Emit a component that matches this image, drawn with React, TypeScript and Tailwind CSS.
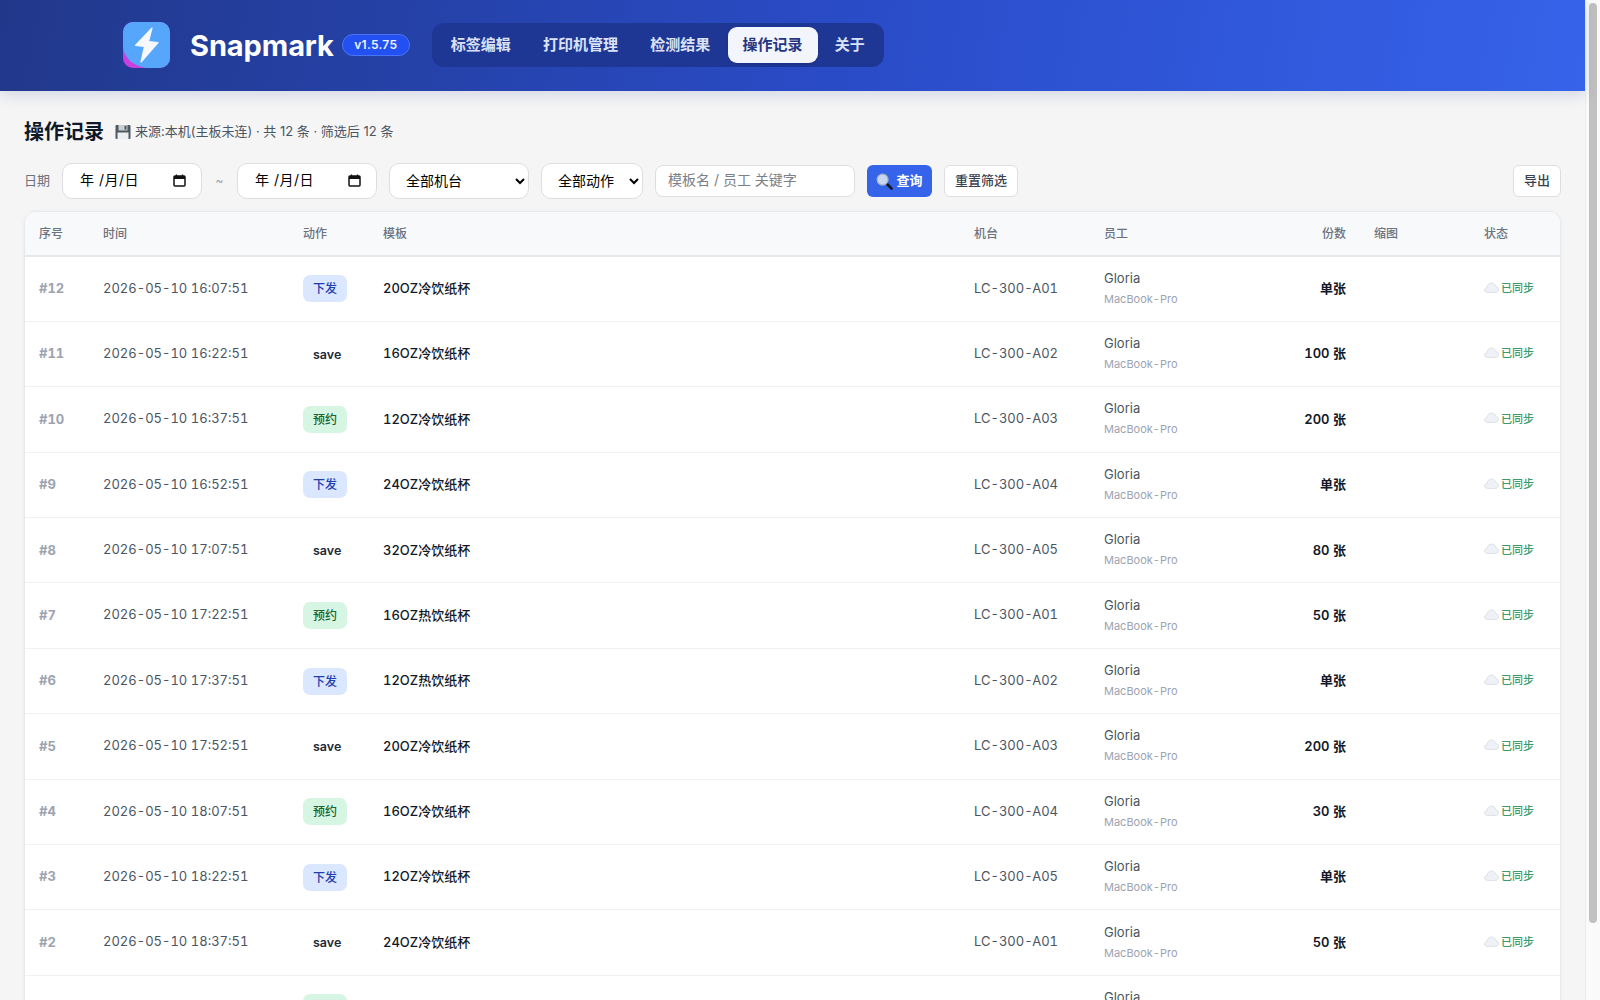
import React from 'react';

type Action = '下发' | 'save' | '预约';

interface LogRow {
  seq: number;
  time: string;
  action: Action;
  template: string;
  machine: string;
  qty: string;
}

const ROWS: LogRow[] = [
  { seq: 12, time: '16:07:51', action: '下发', template: '20OZ冷饮纸杯', machine: 'A01', qty: '单张' },
  { seq: 11, time: '16:22:51', action: 'save', template: '16OZ冷饮纸杯', machine: 'A02', qty: '100 张' },
  { seq: 10, time: '16:37:51', action: '预约', template: '12OZ冷饮纸杯', machine: 'A03', qty: '200 张' },
  { seq: 9, time: '16:52:51', action: '下发', template: '24OZ冷饮纸杯', machine: 'A04', qty: '单张' },
  { seq: 8, time: '17:07:51', action: 'save', template: '32OZ冷饮纸杯', machine: 'A05', qty: '80 张' },
  { seq: 7, time: '17:22:51', action: '预约', template: '16OZ热饮纸杯', machine: 'A01', qty: '50 张' },
  { seq: 6, time: '17:37:51', action: '下发', template: '12OZ热饮纸杯', machine: 'A02', qty: '单张' },
  { seq: 5, time: '17:52:51', action: 'save', template: '20OZ冷饮纸杯', machine: 'A03', qty: '200 张' },
  { seq: 4, time: '18:07:51', action: '预约', template: '16OZ冷饮纸杯', machine: 'A04', qty: '30 张' },
  { seq: 3, time: '18:22:51', action: '下发', template: '12OZ冷饮纸杯', machine: 'A05', qty: '单张' },
  { seq: 2, time: '18:37:51', action: 'save', template: '24OZ冷饮纸杯', machine: 'A01', qty: '50 张' },
  { seq: 1, time: '18:52:51', action: '预约', template: '20OZ冷饮纸杯', machine: 'A02', qty: '单张' },
];

const NAV = ['标签编辑', '打印机管理', '检测结果', '操作记录', '关于'];
const ACTIVE_NAV = '操作记录';

const Logo = () => (
  <svg width="47" height="46" viewBox="0 0 47 46" className="shrink-0">
    <rect width="47" height="46" rx="10" fill="#c93fe0" />
    <path d="M10 0H37a10 10 0 0 1 10 10V36a10 10 0 0 1-10 10H23C11 44 2 37 0 26V10A10 10 0 0 1 10 0Z" fill="#56a6fb" />
    <path
      d="M29 6 12.5 23.5 21.5 24.5 18 40 35 20.5 25.5 19.5Z"
      fill="#f6f8fd"
      stroke="#f6f8fd"
      strokeWidth="1.2"
      strokeLinejoin="round"
    />
  </svg>
);

const Floppy = () => (
  <svg width="16" height="16" viewBox="0 0 16 16" className="shrink-0">
    <rect x="0.5" y="1" width="15" height="14" rx="1" fill="#4f5962" />
    <rect x="3.5" y="1" width="9" height="5.5" fill="#c9ced3" />
    <rect x="9.5" y="1.8" width="2" height="3.8" fill="#4f5962" />
    <rect x="2.5" y="8.5" width="11" height="6.5" fill="#eceef0" />
  </svg>
);

const Magnifier = () => (
  <svg width="17" height="17" viewBox="0 0 17 17" className="shrink-0">
    <path d="M10.5 10.5 15.5 15.5" stroke="#14161c" strokeWidth="2.6" strokeLinecap="round" />
    <circle cx="6.6" cy="6.6" r="5.4" fill="#c9d6ee" stroke="#aab4c6" strokeWidth="1.3" />
  </svg>
);

const Cloud = () => (
  <svg width="15" height="11" viewBox="0 0 15 11" className="-mt-[2px] shrink-0">
    <path
      d="M3.6 10.4C1.8 10.4.6 9.4.6 8c0-1.3 1-2.2 2.2-2.3C3.1 3.2 5 1 7.6 1c2.2 0 3.9 1.6 4.3 3.7 1.5.2 2.6 1.3 2.6 2.8 0 1.7-1.3 2.9-3.1 2.9Z"
      fill="#eef1f5"
      stroke="#d5dae1"
      strokeWidth="0.8"
    />
  </svg>
);

const Calendar = () => (
  <svg width="13" height="13" viewBox="0 0 13 13" className="-mt-[2px] shrink-0">
    <rect x="1" y="2" width="11" height="10" rx="1" fill="none" stroke="#111" strokeWidth="1.5" />
    <rect x="1" y="2" width="11" height="3" fill="#111" />
    <path d="M3.5.5V2M9.5.5V2" stroke="#111" strokeWidth="1.2" />
  </svg>
);

const DateField = () => (
  <div className="flex h-9 w-[140px] items-center justify-between rounded-[10px] border border-[#dcdee2] bg-white pl-[17px] pr-[15px] text-sm text-black">
    <span className="pb-[2px] tracking-[0.5px]">年 /月/日</span>
    <Calendar />
  </div>
);

const Select = ({ label, width }: { label: string; width: string }) => (
  <select
    defaultValue={label}
    className={`h-9 ${width} rounded-[10px] border border-[#dcdee2] bg-white pb-px pl-3 pr-1 text-sm text-black`}
  >
    <option>{label}</option>
  </select>
);

const ActionBadge = ({ action }: { action: Action }) => {
  if (action === 'save') {
    return <span className="inline-block w-11 pl-[10px] text-[12.5px] font-semibold leading-[27px] text-[#1f2937]">save</span>;
  }
  const tone = action === '下发' ? 'bg-[#dbe7fe] text-[#1e40af]' : 'bg-[#d6f6e3] text-[#166534]';
  return (
    <span className={`inline-block w-11 rounded-[7px] text-center text-xs font-medium leading-[27px] ${tone}`}>
      {action}
    </span>
  );
};

const TH = 'px-[14px] text-left text-xs font-medium text-[#6b7280]';

export default function App() {
  return (
    <div className="flex h-screen overflow-hidden bg-[#f5f5f6] font-['Inter','Noto_Sans_CJK_SC',sans-serif]">
      <div className="min-w-0 flex-1">
        {/* Header */}
        <header className="relative z-10 flex h-[91px] items-center bg-[linear-gradient(100deg,#21388a,#2a4cc9_55%,#3663ea)] pb-px pl-[123px] shadow-[0_4px_14px_rgba(30,58,138,0.16)]">
          <Logo />
          <span className="ml-5 text-[29px] font-bold leading-none tracking-[-0.1px] text-white">Snapmark</span>
          <span className="ml-2 flex h-[22px] w-[68px] items-center justify-center rounded-full border border-[#4a74f5] bg-[#2350f0] text-xs font-semibold tracking-[0.3px] text-[#eef3ff]">
            v1.5.75
          </span>
          <nav className="ml-[22px] flex gap-[2.25px] rounded-xl bg-[#1f3794] p-1">
            {NAV.map((item) => (
              <span
                key={item}
                className={
                  item === ACTIVE_NAV
                    ? 'rounded-[9px] bg-[#f3f5fc] px-[15px] text-[15px] font-semibold leading-9 text-[#26357f] shadow-sm'
                    : 'rounded-[9px] px-[15px] text-[15px] font-semibold leading-9 text-[#dbe2f7]'
                }
              >
                {item}
              </span>
            ))}
          </nav>
        </header>

        <main className="px-6">
          {/* Title */}
          <div className="flex h-[72px] items-center pt-[10px]">
            <h1 className="text-[20px] font-bold text-[#111827]">操作记录</h1>
            <div className="ml-[11px] flex items-center gap-1 text-[13px] text-[#4b5563]">
              <Floppy />
              <span>来源:本机(主板未连) · 共 12 条 · 筛选后 12 条</span>
            </div>
          </div>

          {/* Filters */}
          <div className="flex h-9 items-center">
            <span className="mr-3 text-[13px] text-[#6b7280]">日期</span>
            <DateField />
            <span className="mx-[13.5px] text-xs text-[#9ca3af]">~</span>
            <DateField />
            <div className="ml-3">
              <Select label="全部机台" width="w-[140px]" />
            </div>
            <div className="ml-3">
              <Select label="全部动作" width="w-[102px]" />
            </div>
            <input
              placeholder="模板名 / 员工 关键字"
              className="ml-3 h-8 w-[200px] rounded-lg border border-[#dcdee2] bg-white px-3 pb-[3px] text-sm placeholder:text-[#7b7f87]"
            />
            <button className="ml-3 flex h-8 w-[65px] items-center justify-center gap-[3px] rounded-md bg-[#3563e9] text-[13px] font-semibold text-white">
              <Magnifier />
              查询
            </button>
            <button className="ml-3 h-8 w-[74px] rounded-md border border-[#dcdee2] bg-white text-[13px] font-medium text-[#374151]">
              重置筛选
            </button>
            <button className="ml-auto h-8 w-12 rounded-md border border-[#dcdee2] bg-white text-[13px] font-medium text-[#374151]">
              导出
            </button>
          </div>

          {/* Table */}
          <div className="mt-3 overflow-hidden rounded-xl border border-[#e8e9ed] bg-white shadow-[0_1px_4px_rgba(0,0,0,0.05)]">
            <table className="w-full table-fixed border-collapse tabular-nums">
              <colgroup>
                <col className="w-[64px]" />
                <col className="w-[200px]" />
                <col className="w-[80px]" />
                <col className="w-[591px]" />
                <col className="w-[130px]" />
                <col className="w-[170px]" />
                <col className="w-[100px]" />
                <col className="w-[110px]" />
                <col />
              </colgroup>
              <thead>
                <tr className="h-[44px] border-b-2 border-[#e6e8ec] bg-[#f8f9fb]">
                  <th className={TH}>序号</th>
                  <th className={TH}>时间</th>
                  <th className={TH}>动作</th>
                  <th className={TH}>模板</th>
                  <th className={TH}>机台</th>
                  <th className={TH}>员工</th>
                  <th className="px-[14px] text-right text-xs font-medium text-[#6b7280]">份数</th>
                  <th className={TH}>缩图</th>
                  <th className={TH}>状态</th>
                </tr>
              </thead>
              <tbody>
                {ROWS.map((row) => (
                  <tr key={row.seq} className="h-[65.4px] border-b border-[#f1f2f4]">
                    <td className="px-[14px] text-[13px] font-bold text-[#9ca3af]">#{row.seq}</td>
                    <td className="px-[14px] pb-px text-[13px] text-[#4b5563]">2026-05-10 {row.time}</td>
                    <td className="px-[14px]">
                      <ActionBadge action={row.action} />
                    </td>
                    <td className="px-[14px] text-[13px] font-medium text-[#111827]">{row.template}</td>
                    <td className="px-[14px] pb-px text-[13px] text-[#4b5563]">LC-300-{row.machine}</td>
                    <td className="px-[14px]">
                      <div className="text-[13px] leading-[21px] text-[#4b5563]">Gloria</div>
                      <div className="text-[11px] leading-[21px] text-[#9ca3af]">MacBook-Pro</div>
                    </td>
                    <td className="px-[14px] text-right text-[13px] font-semibold text-[#111827]">{row.qty}</td>
                    <td />
                    <td className="px-[14px] pb-px">
                      <div className="flex items-center gap-[2px] text-[11px] font-medium text-[#3d9a6a]">
                        <Cloud />
                        已同步
                      </div>
                    </td>
                  </tr>
                ))}
              </tbody>
            </table>
          </div>
        </main>
      </div>

      {/* Scrollbar, headless browser hides the native one */}
      <div className="w-[15px] shrink-0 border-l border-[#ececec] bg-[#fafafa] pl-[3px] pt-[3px]">
        <div className="h-[920px] w-2 rounded-full bg-[#c1c1c1]" />
      </div>
    </div>
  );
}
